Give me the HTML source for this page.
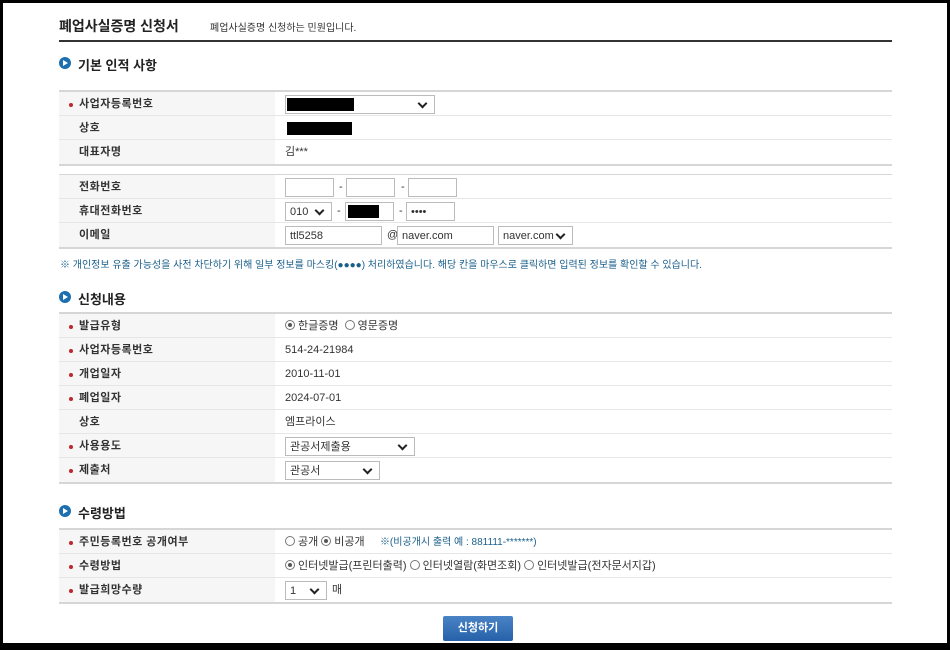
<!DOCTYPE html>
<html><head><meta charset="utf-8"><style>
*{margin:0;padding:0;box-sizing:border-box}
body{width:950px;height:650px;background:#000;position:relative;overflow:hidden;font-family:"Liberation Sans","Noto Sans CJK KR",sans-serif;font-size:11px;color:#333}
.pg{position:absolute;left:3px;top:3px;width:944px;height:640px;background:#fff}
.a{position:absolute}
.h2{font-size:13px;font-weight:bold;color:#222}
.ico{position:absolute;width:12px;height:12px;border-radius:50%;background:#1e6fb0}
.ico:after{content:"";position:absolute;left:4px;top:3px;border-left:5px solid #fff;border-top:3px solid transparent;border-bottom:3px solid transparent}
.tbl{position:absolute;left:59px;width:833px;border-top:2px solid #d6d6d6;border-bottom:2px solid #d6d6d6}
.row{height:24px;border-bottom:1px solid #e6e6e6;position:relative}
.row:last-child{border-bottom:none}
.lb{position:absolute;left:0;top:0;width:216px;height:100%;background:#f6f6f6;padding-left:20px;line-height:25px;font-weight:bold;color:#333;letter-spacing:0.5px}
.lb.r:before{content:"";position:absolute;left:10px;top:11px;width:4px;height:4px;border-radius:50%;background:#c0262d}
.v{position:absolute;left:226px;top:0;line-height:25px}
.in{position:absolute;top:3px;height:19px;border:1px solid #bbb;background:#fff;font-size:11px;line-height:18px;padding-left:4px}
.sel:after{content:"";position:absolute;right:8px;top:4px;width:5px;height:5px;border-right:2px solid #222;border-bottom:2px solid #222;transform:rotate(45deg)}
.blk{position:absolute;background:#000}
.rd{display:inline-block;width:10px;height:10px;border:1px solid #777;border-radius:50%;vertical-align:-1px;margin-right:3px;position:relative}
.rd.on:after{content:"";position:absolute;left:2px;top:2px;width:4px;height:4px;border-radius:50%;background:#555}
</style></head><body><div class="pg"></div>
<div class="a" style="left:59px;top:16px;font-size:14px;font-weight:bold;color:#222">폐업사실증명 신청서</div>
<div class="a" style="left:210px;top:19px;font-size:10px;color:#333">폐업사실증명 신청하는 민원입니다.</div>
<div class="a" style="left:59px;top:40px;width:833px;height:2px;background:#333"></div>

<div class="ico" style="left:59px;top:57px"></div><div class="a h2" style="left:78px;top:55px">기본 인적 사항</div>
<div class="tbl" style="top:90px">
<div class="row"><div class="lb r">사업자등록번호</div><div class="in sel" style="left:226px;width:150px"></div><div class="blk" style="left:228px;top:6px;width:67px;height:13px"></div></div>
<div class="row"><div class="lb">상호</div><div class="blk" style="left:228px;top:6px;width:65px;height:13px"></div></div>
<div class="row"><div class="lb">대표자명</div><div class="v">김***</div></div>
</div>
<div class="tbl" style="top:174px;border-top-width:1px">
<div class="row"><div class="lb">전화번호</div><div class="in" style="left:226px;width:49px"></div><div class="v" style="left:280px">-</div><div class="in" style="left:287px;width:49px"></div><div class="v" style="left:342px">-</div><div class="in" style="left:349px;width:49px"></div></div>
<div class="row"><div class="lb">휴대전화번호</div><div class="in sel" style="left:226px;width:47px">010</div><div class="v" style="left:278px">-</div><div class="in" style="left:286px;width:49px"></div><div class="blk" style="left:289px;top:6px;width:31px;height:13px"></div><div class="v" style="left:340px">-</div><div class="in" style="left:347px;width:49px">••••</div></div>
<div class="row"><div class="lb">이메일</div><div class="in" style="left:226px;width:97px">ttl5258</div><div class="v" style="left:328px">@</div><div class="in" style="left:338px;width:97px">naver.com</div><div class="in sel" style="left:439px;width:75px">naver.com</div></div>
</div>
<div class="a" style="left:60px;top:256px;font-size:10px;color:#1a5f8a">※ 개인정보 유출 가능성을 사전 차단하기 위해 일부 정보를 마스킹(●●●●) 처리하였습니다. 해당 칸을 마우스로 클릭하면 입력된 정보를 확인할 수 있습니다.</div>

<div class="ico" style="left:59px;top:291px"></div><div class="a h2" style="left:78px;top:289px">신청내용</div>
<div class="tbl" style="top:312px">
<div class="row"><div class="lb r">발급유형</div><div class="v"><span class="rd on"></span>한글증명 &nbsp;<span class="rd"></span>영문증명</div></div>
<div class="row"><div class="lb r">사업자등록번호</div><div class="v">514-24-21984</div></div>
<div class="row"><div class="lb r">개업일자</div><div class="v">2010-11-01</div></div>
<div class="row"><div class="lb r">폐업일자</div><div class="v">2024-07-01</div></div>
<div class="row"><div class="lb">상호</div><div class="v">엠프라이스</div></div>
<div class="row"><div class="lb r">사용용도</div><div class="in sel" style="left:226px;width:130px">관공서제출용</div></div>
<div class="row"><div class="lb r">제출처</div><div class="in sel" style="left:226px;width:95px">관공서</div></div>
</div>

<div class="ico" style="left:59px;top:505px"></div><div class="a h2" style="left:78px;top:503px">수령방법</div>
<div class="tbl" style="top:528px">
<div class="row"><div class="lb r">주민등록번호 공개여부</div><div class="v"><span class="rd"></span>공개 <span class="rd on"></span>비공개 &nbsp;&nbsp;&nbsp;&nbsp;<span style="color:#1a5f8a;font-size:10px">※(비공개시 출력 예 : 881111-*******)</span></div></div>
<div class="row"><div class="lb r">수령방법</div><div class="v"><span class="rd on"></span>인터넷발급(프린터출력) <span class="rd"></span>인터넷열람(화면조회) <span class="rd"></span>인터넷발급(전자문서지갑)</div></div>
<div class="row"><div class="lb r">발급희망수량</div><div class="in sel" style="left:226px;width:42px">1</div><div class="v" style="left:273px">매</div></div>
</div>
<div class="a" style="left:443px;top:616px;width:70px;height:25px;background:linear-gradient(#4a84c6,#2660a8);border-radius:2px;color:#fff;font-weight:bold;font-size:11px;text-align:center;line-height:25px">신청하기</div>
</body></html>
